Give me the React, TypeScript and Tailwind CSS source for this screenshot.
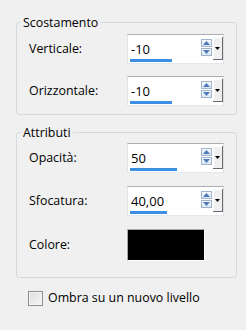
import React from "react";

const font = { fontFamily: '"Segoe UI", "Open Sans", "Noto Sans", sans-serif' };

function Arrow({ up }: { up: boolean }) {
  return (
    <div className="flex h-[8px] w-[11px] items-center justify-center border border-[#a0b4cc] bg-gradient-to-b from-[#f6f9fc] to-[#dde6f0]">
      <svg width="7" height="4" viewBox="0 0 7 4">
        {up ? <polygon points="0,4 7,4 3.5,0" fill="#4d7ab8" /> : <polygon points="0,0 7,0 3.5,4" fill="#4d7ab8" />}
      </svg>
    </div>
  );
}

function Spin({ value, bar }: { value: string; bar: number }) {
  return (
    <div className="flex h-[30px] w-[97px] border border-[#abadb3] border-b-[#e3e9ef] border-r-[#dbdfe6] border-l-[#e2e3ea] bg-white">
      <div className="flex w-[73px] flex-col pl-[2px]">
        <span className="block pl-[1px] pt-[7px] text-[13px] leading-[14px] text-black">{value}</span>
        <div className="mt-auto mb-[1px] h-[3px] bg-[#3c8fe2]" style={{ width: bar }} />
      </div>
      <div className="mr-[1px] flex flex-col gap-[1px] pt-[4px]">
        <Arrow up />
        <Arrow up={false} />
      </div>
      <div className="mt-[2px] flex h-[23px] w-[10px] items-center justify-center border-r border-b border-[#696969] bg-[#f0f0f0] shadow-[inset_1px_1px_0_#ffffff]">
        <svg width="5" height="3" viewBox="0 0 5 3">
          <polygon points="0,0 5,0 2.5,3" fill="#000" />
        </svg>
      </div>
    </div>
  );
}

function Row({ label, children }: { label: string; children: React.ReactNode }) {
  return (
    <div className="flex items-center">
      <span className="w-[98px] text-[12.4px] leading-[16px] text-black">{label}</span>
      {children}
    </div>
  );
}

export default function App() {
  return (
    <div className="h-[330px] w-[246px] bg-[#f0f0f0] px-[16px] pt-[15px]" style={font}>
      <fieldset className="w-[221px] rounded-[3px] border border-[#d5dadf] pb-[8px]">
        <legend className="ml-[4px] px-[2px] text-[12.4px] leading-[15px] text-black">Scostamento</legend>
        <div className="flex flex-col gap-[12px] pl-[12px] pt-[4px]">
          <Row label="Verticale:">
            <Spin value="-10" bar={42} />
          </Row>
          <Row label="Orizzontale:">
            <Spin value="-10" bar={42} />
          </Row>
        </div>
      </fieldset>
      <fieldset className="mt-[10px] w-[221px] rounded-[3px] border border-[#d5dadf] pb-[16px]">
        <legend className="ml-[4px] px-[2px] text-[12.4px] leading-[15px] text-black">Attributi</legend>
        <div className="flex flex-col gap-[13px] pl-[12px] pt-[3px]">
          <Row label="Opacità:">
            <Spin value="50" bar={47} />
          </Row>
          <Row label="Sfocatura:">
            <Spin value="40,00" bar={37} />
          </Row>
          <Row label="Colore:">
            <div className="h-[32px] w-[78px] border border-t-[#a8a8a8] border-l-[#a8a8a8] border-r-[#ffffff] border-b-[#ffffff] bg-black" />
          </Row>
        </div>
      </fieldset>
      <div className="mt-[12px] flex items-center pl-[12px]">
        <div className="h-[15px] w-[15px] border border-[#8e8f8f] bg-gradient-to-br from-[#dcdcdc] to-[#f8f8f8] shadow-[inset_0_0_0_1px_#f4f4f4]" />
        <span className="ml-[5px] text-[12.4px] leading-[16px] text-black">Ombra su un nuovo livello</span>
      </div>
    </div>
  );
}
